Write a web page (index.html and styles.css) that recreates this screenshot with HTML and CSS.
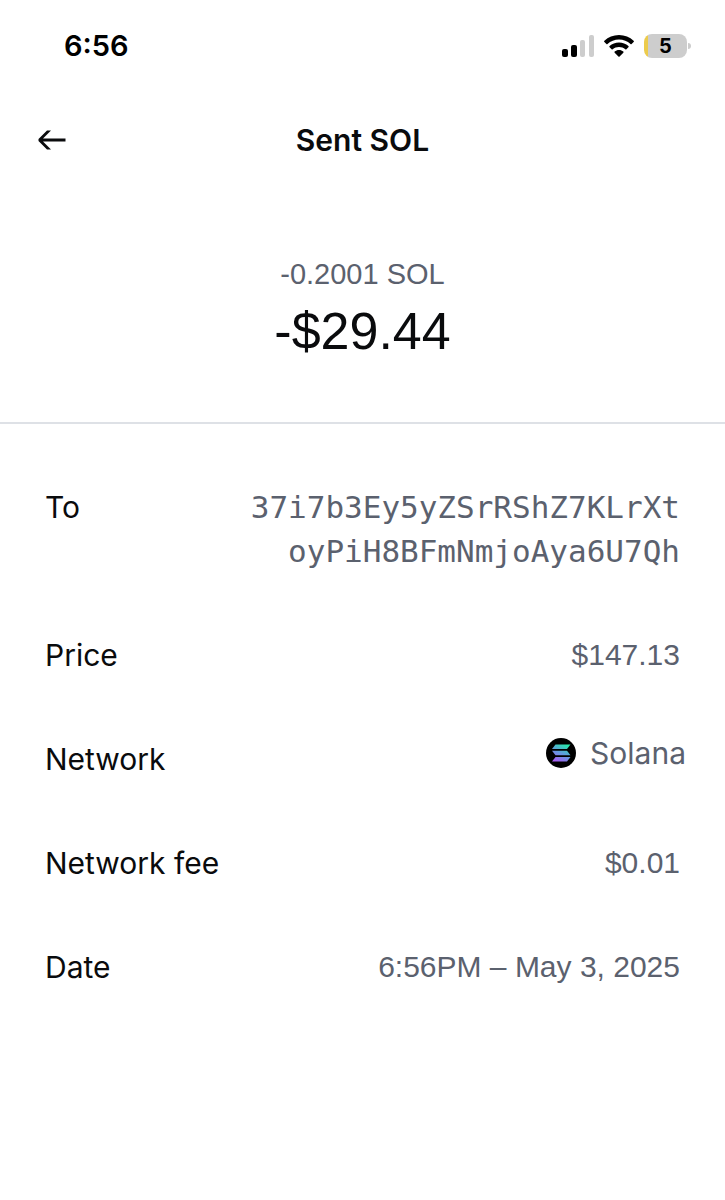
FILE: index.html
```html
<!DOCTYPE html>
<html lang="en">
<head>
    <meta charset="utf-8">
    <meta name="viewport" content="width=device-width, initial-scale=1">
    <title>Sent SOL</title>
    <link rel="stylesheet" href="styles.css">
</head>
<body>
    <div class="status-bar">
        <span class="time">6:56</span>
        <div class="status-icons">
            <svg width="32" height="22" viewBox="0 0 32 22">
                <rect x="0" y="14" width="6" height="8" rx="2" fill="#000"/>
                <rect x="9" y="10" width="6" height="12" rx="2" fill="#000"/>
                <rect x="18" y="5" width="5" height="17" rx="2" fill="#cdcdcd"/>
                <rect x="27" y="0" width="5" height="22" rx="2" fill="#cdcdcd"/>
            </svg>
            <svg width="30" height="22" viewBox="0 0 30 22">
                <path d="M15 0C9.300 0 4.200 2.200.4 5.800a.8.800 0 0 0 0 1.200l2 2c.3.300.8.300 1.100 0C6.600 6.200 10.600 4.500 15 4.500S23.400 6.200 26.500 9c.3.300.8.300 1.100 0l2-2a.8.800 0 0 0 0-1.200C25.800 2.200 20.700 0 15 0z"/>
                <path d="M15 7.500c-3.600 0-6.900 1.400-9.400 3.600a.8.800 0 0 0 0 1.200l2 2c.3.300.8.300 1.100 0C10.400 12.800 12.600 12 15 12s4.600.8 6.300 2.300c.3.300.8.300 1.100 0l2-2a.8.800 0 0 0 0-1.200c-2.500-2.200-5.800-3.600-9.400-3.600z"/>
                <path d="M15 15c-1.700 0-3.200.6-4.300 1.500a.8.800 0 0 0 0 1.200l3.700 3.700c.3.300.9.300 1.200 0l3.700-3.700a.8.800 0 0 0 0-1.200C18.200 15.600 16.700 15 15 15z"/>
            </svg>
            <div class="battery">
                <span class="battery-level">5</span>
            </div>
        </div>
    </div>

    <header class="header">
        <button type="button" class="back" aria-label="Back">
            <svg width="28" height="20" viewBox="0 0 28 20">
                <path d="M9 0.500H13L5 8.500H27.500V11.500H5L13 19.500H9L0.500 11V9z" fill="#0a0b0d"/>
            </svg>
        </button>
        <h1>Sent SOL</h1>
    </header>

    <main>
        <section class="amount">
            <p class="crypto">-0.2001 SOL</p>
            <p class="fiat">-$29.44</p>
        </section>

        <dl class="details">
            <div class="row">
                <dt>To</dt>
                <dd class="address">37i7b3Ey5yZSrRShZ7KLrXt<br>oyPiH8BFmNmjoAya6U7Qh</dd>
            </div>
            <div class="row">
                <dt>Price</dt>
                <dd>$147.13</dd>
            </div>
            <div class="row network">
                <dt>Network</dt>
                <dd>
                    <svg width="30" height="30" viewBox="0 0 30 30">
                        <defs>
                            <linearGradient id="solana" gradientUnits="userSpaceOnUse" x1="20" y1="6" x2="11" y2="24">
                                <stop offset="0" stop-color="#24eda8"/>
                                <stop offset="0.5" stop-color="#5f9cdc"/>
                                <stop offset="1" stop-color="#a95cf5"/>
                            </linearGradient>
                        </defs>
                        <circle cx="15" cy="15" r="15" fill="#000"/>
                        <g fill="url(#solana)">
                            <path d="M9.500 6.500H24.500L21 11H6z"/>
                            <path d="M6 12.800H21L24.500 17.200H9.500z"/>
                            <path d="M9.500 19H24.500L21 23.500H6z"/>
                        </g>
                    </svg>
                    <span>Solana</span>
                </dd>
            </div>
            <div class="row">
                <dt>Network fee</dt>
                <dd>$0.01</dd>
            </div>
            <div class="row">
                <dt>Date</dt>
                <dd>6:56PM – May 3, 2025</dd>
            </div>
        </dl>
    </main>
</body>
</html>
```
FILE: styles.css
```css
* {
    box-sizing: border-box;
    margin: 0;
    padding: 0;
}

body {
    background-color: #fff;
    color: #0a0b0d;
    font-family: Inter, "Liberation Sans", sans-serif;
    font-size: 30px;
    line-height: 44px;
}

.status-bar {
    display: flex;
    justify-content: space-between;
    align-items: center;
    padding: 24px 34px 0 64px;
}

.time {
    color: #000;
    font-size: 29px;
    font-weight: 600;
}

.status-icons {
    display: flex;
    align-items: center;
    gap: 10px;
}

.battery {
    position: relative;
    width: 43px;
    height: 24px;
    margin-right: 4px;
    border-radius: 8px;
    background: linear-gradient(to right, #eccb4c 4px, #cdcdcd 4px);
    color: #000;
    font-size: 20px;
    font-weight: 700;
    line-height: 24px;
    text-align: center;
}

.battery::after {
    content: "";
    position: absolute;
    top: 9px;
    right: -4px;
    width: 3px;
    height: 6px;
    border-radius: 0 3px 3px 0;
    background-color: #cdcdcd;
}

.header {
    display: grid;
    grid-template-columns: 28px 1fr 28px;
    align-items: center;
    padding: 50px 38px 0;
}

.back {
    display: flex;
    border: none;
    background: none;
    cursor: pointer;
}

h1 {
    font-size: 30px;
    font-weight: 600;
    text-align: center;
}

.amount {
    padding: 90px 32px 56px;
    border-bottom: 2px solid #dee1e6;
    font-family: "Liberation Sans", sans-serif;
    text-align: center;
}

.crypto {
    color: #5b616e;
    font-size: 29px;
}

.fiat {
    font-size: 52px;
    line-height: 70px;
}

.details {
    padding: 31px 45px;
}

.row {
    display: flex;
    justify-content: space-between;
    padding: 30px 0;
}

dd {
    color: #5b616e;
    font-family: "Liberation Sans", sans-serif;
    text-align: right;
}

.address {
    font-family: "DejaVu Sans Mono", monospace;
    font-size: 31px;
}

.network dd {
    display: flex;
    align-items: center;
    gap: 14px;
    height: 32px;
    margin-right: -6px;
    font-family: Inter, "Liberation Sans", sans-serif;
}
```
